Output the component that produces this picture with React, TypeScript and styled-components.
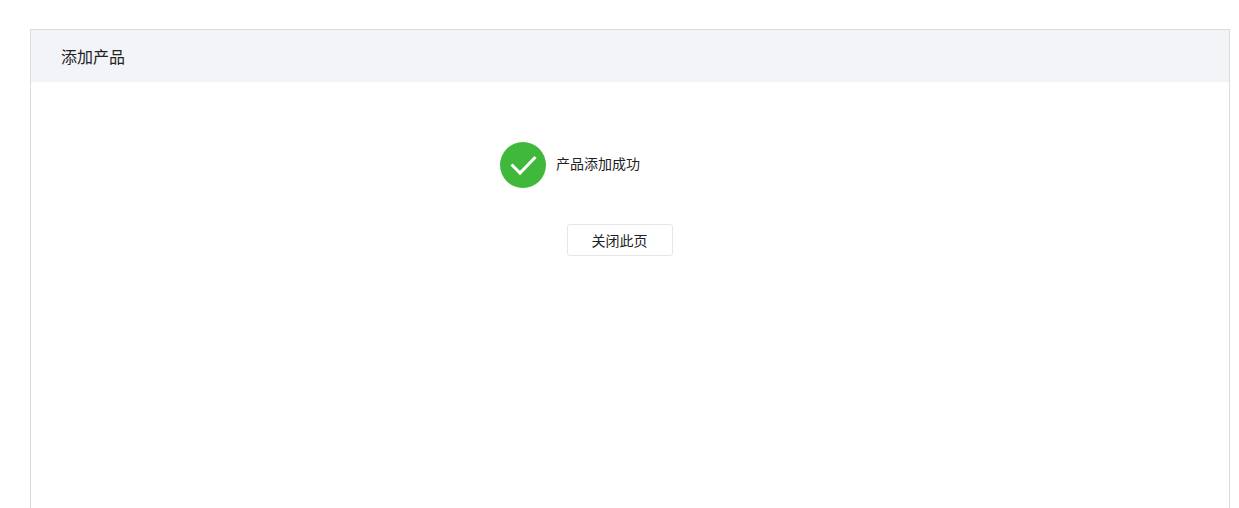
import React from "react";
import styled, { createGlobalStyle } from "styled-components";

const GlobalStyle = createGlobalStyle`
  html, body {
    margin: 0;
    height: 100%;
    overflow: hidden;
    background: #fff;
    font-family: "Liberation Sans", "Noto Sans CJK SC", sans-serif;
  }
`;

const Page = styled.div`
  padding: 29px 9px 0 30px;
  height: 479px;
`;

const Panel = styled.section`
  height: 100%;
  border: 1px solid #dcdcdc;
  border-bottom: 0;
`;

const PanelHeader = styled.header`
  height: 52px;
  padding: 0 0 1px 30px;
  box-sizing: border-box;
  display: flex;
  align-items: center;
  background: #f3f4f8;
  color: #222;
  font-size: 16px;
`;

const PanelBody = styled.div`
  padding: 60px 20px 0 0;
  display: flex;
  flex-direction: column;
  align-items: center;
`;

const ResultRow = styled.div`
  width: 240px;
  display: flex;
  align-items: center;
  gap: 10px;
`;

const ResultText = styled.span`
  padding-bottom: 4px;
  color: #222;
  font-size: 14px;
`;

const CloseButton = styled.button`
  width: 106px;
  height: 32px;
  margin-top: 36px;
  padding: 0 1px 0 0;
  background: #fff;
  border: 1px solid #e6e6e6;
  border-radius: 3px;
  color: #222;
  font: inherit;
  font-size: 14px;
`;

const SuccessIcon = () => (
  <svg width="46" height="46" viewBox="0 0 46 46">
    <circle cx="23" cy="23" r="23" fill="#3fb83c" />
    <path d="M11.5 22.5 L20 31 L35.5 15" fill="none" stroke="#fff" strokeWidth="3" />
  </svg>
);

export default function App() {
  return (
    <>
      <GlobalStyle />
      <Page>
        <Panel>
          <PanelHeader>添加产品</PanelHeader>
          <PanelBody>
            <ResultRow>
              <SuccessIcon />
              <ResultText>产品添加成功</ResultText>
            </ResultRow>
            <CloseButton type="button">关闭此页</CloseButton>
          </PanelBody>
        </Panel>
      </Page>
    </>
  );
}
